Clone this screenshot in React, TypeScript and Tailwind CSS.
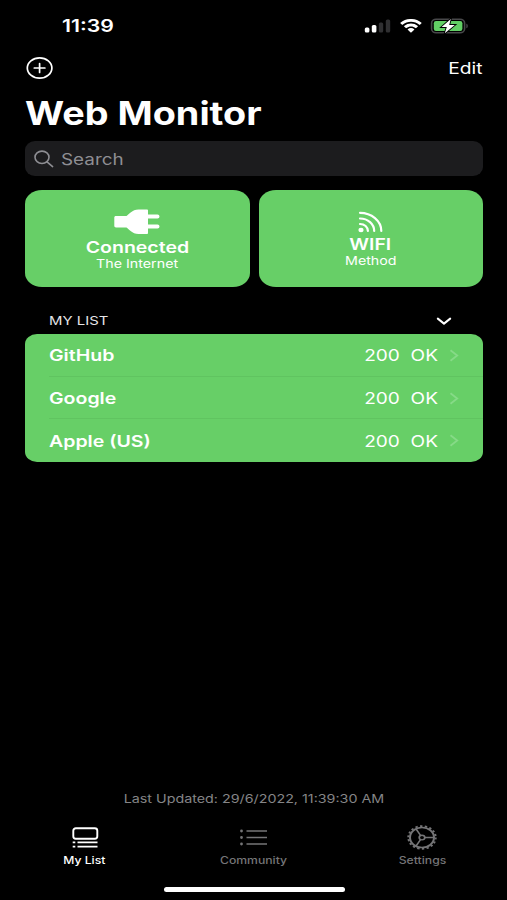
import type { ReactNode } from "react";
import clsx from "clsx";

interface Site {
  name: string;
  code: number;
  status: string;
}

const sites: Site[] = [
  { name: "GitHub", code: 200, status: "OK" },
  { name: "Google", code: 200, status: "OK" },
  { name: "Apple (US)", code: 200, status: "OK" },
];

// Wide text: the glyphs are stretched sideways, the line box is not
function Wide({ className, children }: { className?: string; children: ReactNode }) {
  return (
    <span className={clsx("inline-block whitespace-nowrap", className)}>
      {children}
    </span>
  );
}

function StatusBar() {
  return (
    <header className="flex h-[52px] items-center justify-between pl-[62px] pr-[38px]">
      <Wide className="origin-left scale-x-[1.25] text-[17px] leading-none font-semibold">11:39</Wide>
      <div className="flex items-center">
        <svg width="27" height="14" viewBox="0 0 27 14">
          <rect x="0.8" y="8.5" width="4.6" height="5" rx="1.5" fill="#fff" />
          <rect x="7.8" y="6" width="4.6" height="7.5" rx="1.5" fill="#fff" />
          <rect x="14.8" y="3.4" width="4.4" height="10.1" rx="1.5" fill="#303032" />
          <rect x="21.8" y="0.6" width="4.4" height="12.9" rx="1.5" fill="#303032" />
        </svg>
        <svg className="ml-[9px]" width="22" height="14" viewBox="0 0 17 12" preserveAspectRatio="none" fill="#fff">
          <path d="M8.5 2.4c2.4 0 4.7.9 6.4 2.6.1.1.3.1.5 0l1.2-1.3c.1-.1.1-.4 0-.5-4.6-4.3-11.7-4.3-16.3 0-.1.1-.1.4 0 .5l1.3 1.3c.1.1.3.1.4 0C3.8 3.3 6.1 2.4 8.5 2.4z" />
          <path d="M8.5 6.4c1.3 0 2.6.5 3.5 1.4.1.1.4.1.5 0l1.3-1.3c.1-.1.1-.4 0-.5-3-2.8-7.6-2.8-10.6 0-.1.1-.1.4 0 .5l1.3 1.3c.1.1.4.1.5 0 1-.9 2.2-1.4 3.5-1.4z" />
          <path d="M11 9.2c.1-.1.1-.4 0-.5-1.4-1.2-3.6-1.2-5 0-.1.1-.1.4 0 .5l2.2 2.3c.1.1.4.1.5 0z" />
        </svg>
        <svg className="ml-[8px]" width="39" height="16" viewBox="0 0 39 16">
          <rect x="1.6" y="1.2" width="33" height="13.6" rx="4.5" ry="4" fill="none" stroke="#48484a" strokeWidth="1.6" />
          <rect x="3.8" y="3" width="28.6" height="10" rx="2.2" fill="#62cf65" />
          <path d="M36.3 5.7c2 .5 2 4.1 0 4.600z" fill="#48484a" />
          <path d="M20.8.9 11.600 9h5.200l-2 6.300L24.800 7h-5.600z" fill="#fff" stroke="#000" strokeWidth="1.800" paintOrder="stroke" />
        </svg>
      </div>
    </header>
  );
}

function SearchField() {
  return (
    <div className="ml-[25px] mr-6 flex h-[35px] items-center rounded-[10px/9px] bg-[#1c1c1e] pl-[9px] text-[#8e8e93]">
      <svg width="20" height="18" viewBox="0 0 20 18" fill="none" stroke="currentColor" strokeWidth="1.6" strokeLinecap="round">
        <ellipse cx="8" cy="7.3" rx="7" ry="6.2" />
        <path d="m13 11.8 5.6 4.800" />
      </svg>
      <Wide className="ml-[7px] origin-left scale-x-[1.18] text-[16px] leading-none">Search</Wide>
    </div>
  );
}

function PlugIcon() {
  return (
    <svg width="46" height="26" viewBox="0 0 46 26" fill="#fff">
      <path d="M2 7h10.500C15 5.500 18 .5 24.500.5h8.300c.7 0 1.200.4 1.200 1V5.500h9.500a2 2 0 0 1 0 4H34v6h9.500a2 2 0 0 1 0 4H34v4.500c0 .6-.5 1-1.200 1h-8.300c-6.500 0-9.500-5-12-6.500H2c-1 0-1.700-.6-1.700-1.400V8.400C.3 7.600 1 7 2 7z" />
    </svg>
  );
}

function WaveIcon() {
  return (
    <svg width="26" height="22" viewBox="0 0 26 22" fill="none" stroke="#fff" strokeWidth="2.2" strokeLinecap="round">
      <ellipse cx="3" cy="19" rx="2.6" ry="2.2" fill="#fff" stroke="none" />
      <path d="M2 13c4.500 0 7.900 2.900 7.900 7" />
      <path d="M2 7.500c7.900 0 14.200 5.500 14.200 12.500" />
      <path d="M2 1.800c11.500 0 21.300 8 21.300 18.200" />
    </svg>
  );
}

function SiteRow({ site, last }: { site: Site; last: boolean }) {
  return (
    <li className="flex flex-1 pl-6">
      <div className={clsx("flex flex-1 items-center border-b pr-6 pt-px", last ? "border-transparent" : "border-[#60c460]")}>
        <Wide className="origin-left scale-x-[1.22] text-[16px] leading-none font-semibold">{site.name}</Wide>
        <div className="ml-auto flex items-center">
          <Wide className="origin-right scale-x-[1.19] whitespace-pre text-[16px] leading-none">
            {site.code}{"  "}{site.status}
          </Wide>
          <svg className="ml-[11px]" width="10" height="13" viewBox="0 0 10 13" fill="none" stroke="#86da87" strokeWidth="1.800">
            <path d="m1.500 1.200 6.700 5.300-6.700 5.300" />
          </svg>
        </div>
      </div>
    </li>
  );
}

function MyListIcon() {
  return (
    <svg width="28" height="22" viewBox="0 0 28 22" fill="none" stroke="currentColor" strokeWidth="1.9">
      <rect x="2.3" y="1.3" width="24" height="10.5" rx="2.5" />
      <path d="M6.500 15.400h20M6.500 19.600h20M1.700 15.400h2.600M1.700 19.600h2.600" />
    </svg>
  );
}

function CommunityIcon() {
  return (
    <svg width="28" height="22" viewBox="0 0 28 22" fill="none" stroke="currentColor" strokeWidth="1.5">
      <path d="M6.500 4h20.500M6.500 10.500h20.500M6.500 17h20.500" />
      <path d="M1.500 4h.01M1.500 10.500h.01M1.500 17h.01" strokeWidth="2.800" strokeLinecap="round" />
    </svg>
  );
}

function SettingsIcon() {
  return (
    <svg className="-mt-px mr-px" width="30" height="25" viewBox="0 0 30 30" preserveAspectRatio="none" fill="none" stroke="currentColor" strokeWidth="1.7">
      <circle cx="15" cy="15" r="12" strokeWidth="2" />
      <circle cx="15" cy="15" r="13.7" strokeWidth="2" strokeDasharray="2.4 2.382" />
      <circle cx="15" cy="15" r="2.8" />
      <path d="M17.800 15H27M13.600 12.600 9 4.600M13.600 17.400 9 25.400" />
    </svg>
  );
}

function Tab({ icon, label, active }: { icon: ReactNode; label: string; active?: boolean }) {
  return (
    <div className={clsx("flex flex-1 flex-col items-center", active ? "text-white" : "text-[#757577]")}>
      <div className="flex h-[26px] items-center">{icon}</div>
      <Wide className="mt-1 scale-x-[1.22] text-[10px] leading-none font-medium">{label}</Wide>
    </div>
  );
}

export default function App() {
  return (
    <div className="flex h-[900px] w-[507px] flex-col overflow-hidden bg-black font-['Inter',sans-serif] text-white">
      <StatusBar />

      <div className="flex h-8 items-center justify-between pl-6 pr-6">
        <svg className="ml-[2px]" width="28" height="24" viewBox="0 0 28 24" fill="none" stroke="#fff" strokeWidth="1.7" strokeLinecap="round">
          <ellipse cx="13.6" cy="12" rx="12.3" ry="10.2" />
          <path d="M8.300 12h10.600M13.600 7.500v9" />
        </svg>
        <Wide className="origin-right scale-x-[1.2] text-[16px] leading-none">Edit</Wide>
      </div>

      <h1 className="flex h-[57px] items-center pl-[25px] pt-[2px]">
        <Wide className="origin-left scale-x-[1.18] text-[32px] leading-none font-bold">Web Monitor</Wide>
      </h1>

      <SearchField />

      <div className="mt-[14px] grid h-[97px] grid-cols-2 gap-[9px] pl-[25px] pr-[24px]">
        <div className="flex flex-col items-center rounded-[17px/14px] bg-[#67cf67] pt-[19px]">
          <PlugIcon />
          <Wide className="mt-[4px] scale-x-[1.22] text-[16px] leading-none font-semibold">Connected</Wide>
          <Wide className="mt-[4px] scale-x-[1.24] text-[11.5px] leading-none">The Internet</Wide>
        </div>
        <div className="flex flex-col items-center rounded-[17px/14px] bg-[#67cf67] pt-[21px]">
          <WaveIcon />
          <Wide className="mt-[3px] scale-x-[1.21] text-[16px] leading-none font-semibold">WIFI</Wide>
          <Wide className="mt-[4px] scale-x-[1.24] text-[11.5px] leading-none">Method</Wide>
        </div>
      </div>

      <div className="mt-[17px] flex h-[30px] items-center justify-between pl-[49px] pr-[55px] pt-1">
        <Wide className="origin-left scale-x-[1.21] text-[12.3px] leading-none text-[#e5e5e7]">MY LIST</Wide>
        <svg width="16" height="9" viewBox="0 0 16 9" fill="none" stroke="#fff" strokeWidth="2" strokeLinecap="round" strokeLinejoin="round">
          <path d="m1.800 1.600 6.200 5 6.200-5" />
        </svg>
      </div>

      <ul className="ml-[25px] mr-6 flex h-32 flex-col overflow-hidden rounded-[12px/10px] bg-[#67cf67]">
        {sites.map((site, i) => (
          <SiteRow key={site.name} site={site} last={i === sites.length - 1} />
        ))}
      </ul>

      <div className="mt-auto flex justify-center">
        <Wide className="scale-x-[1.265] text-[11.3px] leading-none text-[#858587]">
          Last Updated: 29/6/2022, 11:39:30 AM
        </Wide>
      </div>

      <nav className="mt-5 flex">
        <Tab icon={<MyListIcon />} label="My List" active />
        <Tab icon={<CommunityIcon />} label="Community" />
        <Tab icon={<SettingsIcon />} label="Settings" />
      </nav>
      <div className="ml-[164px] mb-2 mt-[22px] h-[5px] w-[181px] rounded-full bg-white" />
    </div>
  );
}
